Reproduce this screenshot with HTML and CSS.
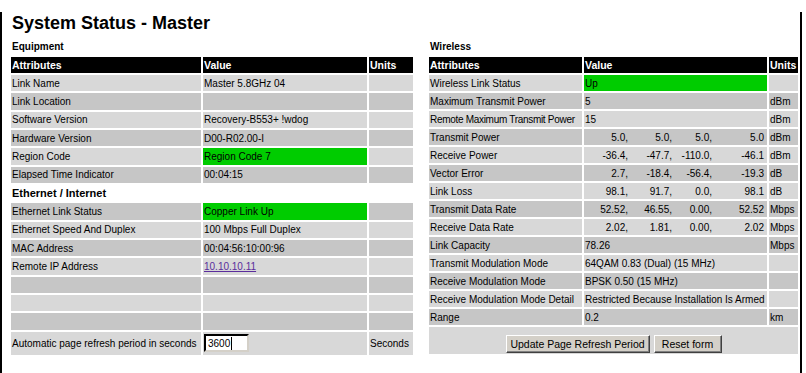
FILE: index.html
```html
<!DOCTYPE html>
<html>
<head>
<meta charset="utf-8">
<link rel="stylesheet" href="styles.css">
</head>
<body>
<div class="frame">
  <h1 class="title">System Status - Master</h1>
  <div class="panels">
    <section class="panel">
      <h2 class="sect">Equipment</h2>
      <table class="grid eq">
        <colgroup><col class="c-attr-l"><col class="c-val-l"><col class="c-unit-l"></colgroup>
        <tr class="hd"><th>Attributes</th><th>Value</th><th>Units</th></tr>
        <tr class="lt"><td>Link Name</td><td>Master 5.8GHz 04</td><td></td></tr>
        <tr class="dk"><td>Link Location</td><td></td><td></td></tr>
        <tr class="lt"><td>Software Version</td><td>Recovery-B553+ !wdog</td><td></td></tr>
        <tr class="dk"><td>Hardware Version</td><td>D00-R02.00-I</td><td></td></tr>
        <tr class="lt"><td>Region Code</td><td class="ok">Region Code 7</td><td></td></tr>
        <tr class="dk"><td>Elapsed Time Indicator</td><td>00:04:15</td><td></td></tr>
        <tr class="sub"><td colspan="3">Ethernet / Internet</td></tr>
        <tr class="dk"><td>Ethernet Link Status</td><td class="ok">Copper Link Up</td><td></td></tr>
        <tr class="lt"><td>Ethernet Speed And Duplex</td><td>100 Mbps Full Duplex</td><td></td></tr>
        <tr class="dk"><td>MAC Address</td><td>00:04:56:10:00:96</td><td></td></tr>
        <tr class="lt"><td>Remote IP Address</td><td><a class="ip" href="#">10.10.10.11</a></td><td></td></tr>
        <tr class="dk"><td></td><td></td><td></td></tr>
        <tr class="lt"><td></td><td></td><td></td></tr>
        <tr class="dk"><td></td><td></td><td></td></tr>
        <tr class="lt last"><td>Automatic page refresh period in seconds</td><td><span class="field"><input class="inp" type="text" value="3600"></span></td><td>Seconds</td></tr>
      </table>
    </section>
    <section class="panel">
      <h2 class="sect">Wireless</h2>
      <table class="grid wl">
        <colgroup><col class="c-attr-r"><col class="c-val-r"><col class="c-unit-r"></colgroup>
        <tr class="hd"><th>Attributes</th><th>Value</th><th>Units</th></tr>
        <tr class="lt"><td>Wireless Link Status</td><td class="ok">Up</td><td></td></tr>
        <tr class="dk"><td>Maximum Transmit Power</td><td>5</td><td>dBm</td></tr>
        <tr class="lt"><td class="tight">Remote Maximum Transmit Power</td><td>15</td><td>dBm</td></tr>
        <tr class="dk"><td>Transmit Power</td><td><div class="quad"><span>5.0,</span><span>5.0,</span><span>5.0,</span><span>5.0</span></div></td><td>dBm</td></tr>
        <tr class="lt"><td>Receive Power</td><td><div class="quad"><span>-36.4,</span><span>-47.7,</span><span>-110.0,</span><span>-46.1</span></div></td><td>dBm</td></tr>
        <tr class="dk"><td>Vector Error</td><td><div class="quad"><span>2.7,</span><span>-18.4,</span><span>-56.4,</span><span>-19.3</span></div></td><td>dB</td></tr>
        <tr class="lt"><td>Link Loss</td><td><div class="quad"><span>98.1,</span><span>91.7,</span><span>0.0,</span><span>98.1</span></div></td><td>dB</td></tr>
        <tr class="dk"><td>Transmit Data Rate</td><td><div class="quad"><span>52.52,</span><span>46.55,</span><span>0.00,</span><span>52.52</span></div></td><td>Mbps</td></tr>
        <tr class="lt"><td>Receive Data Rate</td><td><div class="quad"><span>2.02,</span><span>1.81,</span><span>0.00,</span><span>2.02</span></div></td><td>Mbps</td></tr>
        <tr class="dk"><td>Link Capacity</td><td>78.26</td><td>Mbps</td></tr>
        <tr class="lt"><td>Transmit Modulation Mode</td><td>64QAM 0.83 (Dual) (15 MHz)</td><td></td></tr>
        <tr class="dk"><td>Receive Modulation Mode</td><td>BPSK 0.50 (15 MHz)</td><td></td></tr>
        <tr class="lt"><td>Receive Modulation Mode Detail</td><td>Restricted Because Installation Is Armed</td><td></td></tr>
        <tr class="dk"><td>Range</td><td>0.2</td><td>km</td></tr>
        <tr class="lt last"><td colspan="3" class="btncell"><div class="btns"><button class="btn b-upd" type="button">Update Page Refresh Period</button><button class="btn b-rst" type="button">Reset form</button></div></td></tr>
      </table>
    </section>
  </div>
</div>
</body>
</html>
```
FILE: styles.css
```css
html, body {
  margin: 0;
  padding: 0;
  background: #fff;
}
body {
  width: 806px;
  height: 373px;
  overflow: hidden;
  font-family: "Liberation Sans", Arial, sans-serif;
  font-size: 10px;
  color: #000;
}
.frame {
  box-sizing: border-box;
  width: 802px;
  height: 372px;
  border-left: 2px solid #000;
  border-right: 2px solid #000;
  border-bottom: 2px solid #000;
  padding-left: 7px;
}
.title {
  margin: 12px 0 0 3px;
  font-size: 18px;
  line-height: 22px;
  font-weight: bold;
}
.panels {
  display: grid;
  grid-template-columns: 406px 373px;
  column-gap: 12px;
  margin-top: 7px;
}
.sect {
  margin: 0 0 0 3px;
  font-size: 10px;
  line-height: 12px;
  font-weight: bold;
}
.grid {
  table-layout: fixed;
  border-collapse: separate;
  border-spacing: 2px;
  margin-top: 2px;
}
.eq { width: 406px; }
.wl { width: 373px; }
.c-attr-l { width: 190px; }
.c-val-l { width: 164px; }
.c-unit-l { width: 44px; }
.c-attr-r { width: 153px; }
.c-val-r { width: 183px; }
.c-unit-r { width: 29px; }

.grid th, .grid td {
  padding: 0 1px;
  text-align: left;
  vertical-align: middle;
  white-space: nowrap;
  overflow: hidden;
}
.grid th {
  background: #000;
  color: #fff;
  font-size: 10.5px;
  font-weight: bold;
  height: 16px;
}
.eq td { height: 16.33px; }
.wl td { height: 16px; }
.lt td { background: #d8d8d8; }
.dk td { background: #c6c6c6; }
.grid td.ok { background: #00cc00; }
.grid td.tight { letter-spacing: -0.3px; }
.sub td {
  background: #fff;
  font-size: 11px;
  font-weight: bold;
}
.eq .last td { height: 23.3px; }
.wl .last td { height: 27px; }

.ip {
  color: #5a2d9c;
  text-decoration: underline;
}
.field {
  position: relative;
  display: inline-block;
  vertical-align: middle;
}
.field::after {
  content: "";
  position: absolute;
  left: 27px;
  top: 3px;
  width: 1px;
  height: 13px;
  background: #000;
}
.inp {
  box-sizing: border-box;
  width: 45px;
  height: 18px;
  margin: 0;
  padding: 0 0 0 2px;
  border: 2px inset #808080;
  border-top-color: #404040;
  border-left-color: #404040;
  border-right-color: #d4d0c8;
  border-bottom-color: #d4d0c8;
  font-family: "Liberation Sans", Arial, sans-serif;
  font-size: 10px;
  background: #fff;
  outline: none;
}

.quad {
  display: flex;
}
.quad span {
  text-align: right;
  flex: none;
}
.quad span:nth-child(1) { width: 43px; }
.quad span:nth-child(2) { width: 44px; }
.quad span:nth-child(3) { width: 40px; }
.quad span:nth-child(4) { width: 52px; }

.grid td.btncell {
  vertical-align: top;
  padding: 0;
}
.btns {
  display: flex;
  justify-content: center;
  gap: 4px;
  padding-top: 8px;
}
.btn {
  box-sizing: border-box;
  height: 18px;
  padding: 0;
  background: #d4d0c8;
  border: 1px solid;
  border-color: #ffffff #404040 #404040 #ffffff;
  box-shadow: inset -1px -1px 0 #808080;
  font-family: "Liberation Sans", Arial, sans-serif;
  font-size: 10.5px;
  color: #000;
}
.b-upd { width: 144px; }
.b-rst { width: 68px; }
```
